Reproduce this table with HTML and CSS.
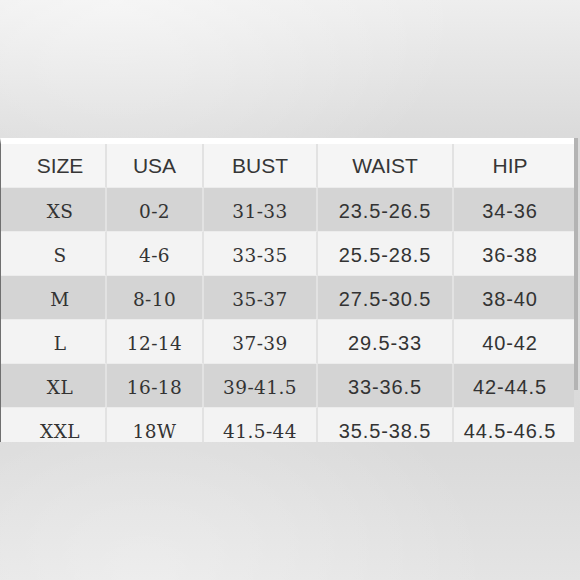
FILE: index.html
```html
<!DOCTYPE html>
<html>
<head>
<meta charset="utf-8">
<link rel="stylesheet" href="styles.css">
</head>
<body>
<div class="page">
  <div class="chart">
    <table class="sizes">
      <colgroup>
        <col class="c-size"><col class="c-usa"><col class="c-bust"><col class="c-waist"><col class="c-hip">
      </colgroup>
      <thead>
        <tr class="head">
          <th class="size">SIZE</th><th>USA</th><th>BUST</th><th>WAIST</th><th class="hip">HIP</th>
        </tr>
      </thead>
      <tbody>
        <tr class="dark"><td class="size serif">XS</td><td class="serif">0-2</td><td class="serif">31-33</td><td>23.5-26.5</td><td class="hip">34-36</td></tr>
        <tr class="light"><td class="size serif">S</td><td class="serif">4-6</td><td class="serif">33-35</td><td>25.5-28.5</td><td class="hip">36-38</td></tr>
        <tr class="dark"><td class="size serif">M</td><td class="serif">8-10</td><td class="serif">35-37</td><td>27.5-30.5</td><td class="hip">38-40</td></tr>
        <tr class="light"><td class="size serif">L</td><td class="serif">12-14</td><td class="serif">37-39</td><td>29.5-33</td><td class="hip">40-42</td></tr>
        <tr class="dark"><td class="size serif">XL</td><td class="serif">16-18</td><td class="serif">39-41.5</td><td>33-36.5</td><td class="hip">42-44.5</td></tr>
        <tr class="light"><td class="size serif">XXL</td><td class="serif">18W</td><td class="serif">41.5-44</td><td>35.5-38.5</td><td class="hip">44.5-46.5</td></tr>
      </tbody>
    </table>
    <div class="edge"></div>
  </div>
</div>
</body>
</html>
```
FILE: styles.css
```css
html, body {
  margin: 0;
  padding: 0;
}
body {
  width: 580px;
  height: 580px;
  overflow: hidden;
}
.page {
  box-sizing: border-box;
  width: 580px;
  height: 580px;
  padding-top: 138px;
  background:
    radial-gradient(ellipse 60% 40% at 20% 0%, rgba(255,255,255,0.45), rgba(255,255,255,0) 100%),
    radial-gradient(ellipse 60% 40% at 25% 100%, rgba(255,255,255,0.35), rgba(255,255,255,0) 100%),
    linear-gradient(180deg, #eeeeee 0%, #dbdbdb 23%, #dadada 78%, #e4e4e4 100%);
}
.chart {
  display: flex;
  align-items: flex-start;
  height: 304px;
  overflow: hidden;
}
.sizes {
  flex: none;
  width: 574px;
  table-layout: fixed;
  border-collapse: separate;
  border-spacing: 0;
  border-top: 6px solid #ffffff;
  border-left: 1px solid #6f6f6f;
  font-family: "Liberation Sans", Arial, sans-serif;
  font-size: 20px;
  letter-spacing: 0.9px;
  color: #333333;
}
.c-size { width: 106px; }
.c-usa { width: 97px; }
.c-bust { width: 114px; }
.c-waist { width: 136px; }
.c-hip { width: 120px; }
.sizes th, .sizes td {
  height: 44px;
  padding: 3px 0 0;
  box-sizing: border-box;
  text-align: center;
  white-space: nowrap;
  border-right: 2px solid #e2e2e2;
  border-bottom: 1px solid #ececec;
}
.sizes th {
  font-weight: normal;
  font-size: 21px;
  letter-spacing: 0;
  padding-top: 0;
  color: #363636;
  background: #f5f5f5;
}
.sizes th:last-child, .sizes td:last-child {
  border-right: none;
}
.sizes .size {
  padding-left: 14px;
}
.sizes .hip {
  padding-right: 8px;
}
.serif {
  font-family: "DejaVu Serif", Georgia, serif;
  font-size: 18.5px;
  letter-spacing: 0.4px;
}
.dark td {
  background: #d4d4d4;
}
.light td {
  background: #f3f3f3;
}
.edge {
  flex: none;
  width: 4px;
  height: 252px;
  background: #b3b3b3;
}
```
